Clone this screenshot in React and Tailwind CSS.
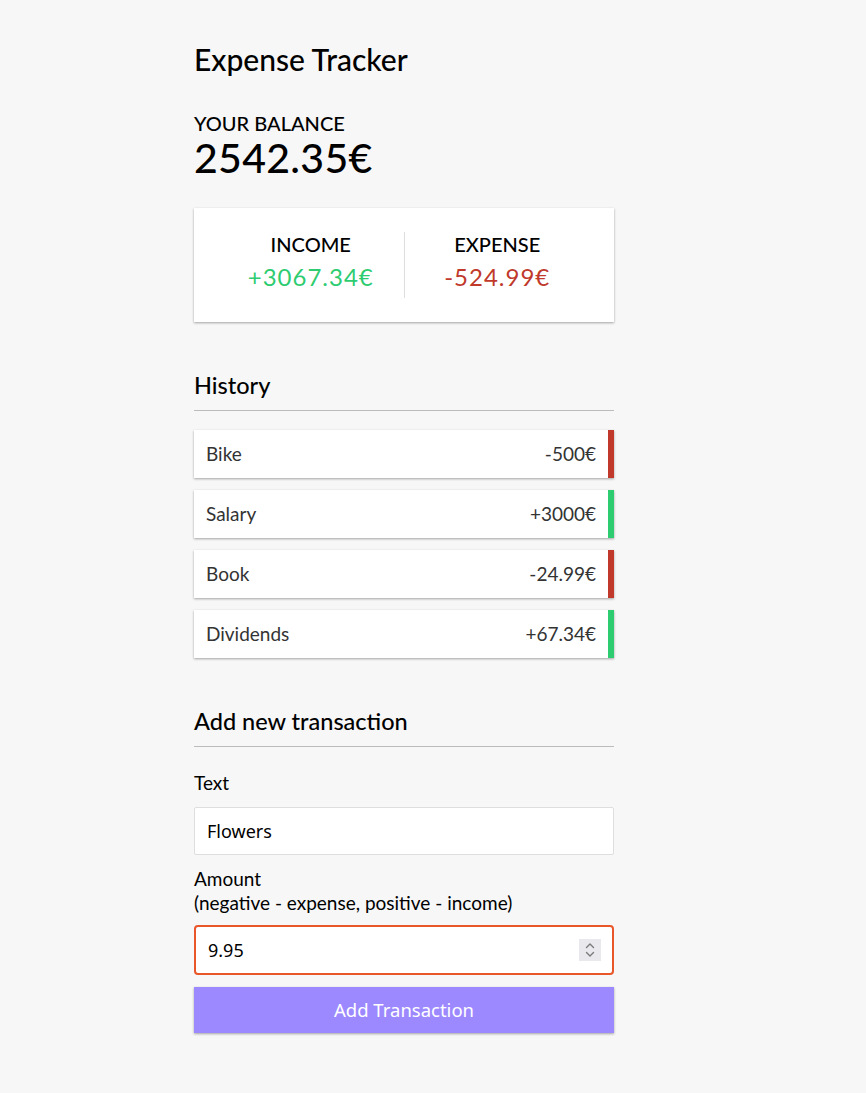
const transactions = [
  { id: 1, text: 'Bike', amount: -500 },
  { id: 2, text: 'Salary', amount: 3000 },
  { id: 3, text: 'Book', amount: -24.99 },
  { id: 4, text: 'Dividends', amount: 67.34 },
]

const fmt = (n) => `${n < 0 ? '-' : '+'}${Math.abs(n)}€`

const Transaction = ({ text, amount }) => (
  <li
    className={`flex h-[48px] items-center justify-between bg-white pl-[12px] pr-[12px] text-[19px] text-[#333] shadow-[0_1px_3px_rgba(0,0,0,0.12),0_1px_2px_rgba(0,0,0,0.24)] border-r-[6px] ${
      amount < 0 ? 'border-[#c0392b]' : 'border-[#2ecc71]'
    }`}
  >
    <span>{text}</span>
    <span>{fmt(amount)}</span>
  </li>
)

// little up/down stepper like the browser's number spinner
const Spinner = () => (
  <div className="absolute right-[13px] top-[14px] flex h-[22px] w-[22px] items-center justify-center bg-[#e9e9ed]">
    <svg width="12" height="18" viewBox="0 0 12 18" fill="none" stroke="#7a7a7a" strokeWidth="1.4" strokeLinecap="round" strokeLinejoin="round">
      <path d="M2.5 6.5 6 3l3.5 3.5" />
      <path d="M2.5 11.5 6 15l3.5-3.5" />
    </svg>
  </div>
)

export default function App() {
  return (
    <div className="min-h-screen bg-[#f7f7f7] pl-[194px] pt-[39px] font-['Lato',sans-serif] text-black">
      <div className="w-[420px]">
        <h1 className="text-[30px] font-medium leading-[40px]">Expense Tracker</h1>

        <h4 className="mt-[32px] text-[20px] font-medium uppercase leading-[24px]">Your Balance</h4>
        <h1 className="text-[41px] font-medium leading-[46px] tracking-[0.3px]">2542.35€</h1>

        <div className="mt-[27px] flex bg-white px-[24px] py-[24px] shadow-[0_1px_3px_rgba(0,0,0,0.12),0_1px_2px_rgba(0,0,0,0.24)]">
          <div className="h-[66px] flex-1 border-r border-[#dedede] text-center">
            <h4 className="text-[20px] font-medium uppercase leading-[24px]">Income</h4>
            <p className="mt-[6px] text-[24px] leading-[30px] tracking-[1px] text-[#2ecc71]">+3067.34€</p>
          </div>
          <div className="h-[66px] flex-1 text-center">
            <h4 className="text-[20px] font-medium uppercase leading-[24px]">Expense</h4>
            <p className="mt-[6px] text-[24px] leading-[30px] tracking-[1px] text-[#c0392b]">-524.99€</p>
          </div>
        </div>

        <h3 className="mt-[48px] border-b border-[#bbb] pb-[10px] text-[23.5px] font-medium leading-[30px]">History</h3>
        <ul className="mt-[19px] flex flex-col gap-[12px]">
          {transactions.map((t) => (
            <Transaction key={t.id} {...t} />
          ))}
        </ul>

        <h3 className="mt-[48px] border-b border-[#bbb] pb-[10px] text-[23.5px] font-medium leading-[30px]">Add new transaction</h3>

        <form className="mt-[24px]">
          <label className="block text-[19px] leading-[24px]">Text</label>
          <input
            type="text"
            defaultValue="Flowers"
            className="mt-[12px] block h-[48px] w-full rounded-[2px] border border-[#dedede] bg-white px-[12px] font-['Noto_Sans',sans-serif] text-[18px] text-black outline-none"
          />

          <label className="mt-[12px] block text-[19px] leading-[24px]">
            Amount
            <br />
            (negative - expense, positive - income)
          </label>
          <div className="relative mt-[10px]">
            <input
              type="text"
              defaultValue="9.95"
              className="block h-[50px] w-full rounded-[4px] border-2 border-[#e8562a] bg-white px-[12px] font-['Noto_Sans',sans-serif] text-[18px] text-black outline-none"
            />
            <Spinner />
          </div>

          <button
            type="button"
            className="mt-[12px] block h-[46px] w-full bg-[#9c88ff] font-['Noto_Sans',sans-serif] text-[18.5px] text-white shadow-[0_1px_3px_rgba(0,0,0,0.12),0_1px_2px_rgba(0,0,0,0.24)]"
          >
            Add Transaction
          </button>
        </form>
      </div>
    </div>
  )
}
